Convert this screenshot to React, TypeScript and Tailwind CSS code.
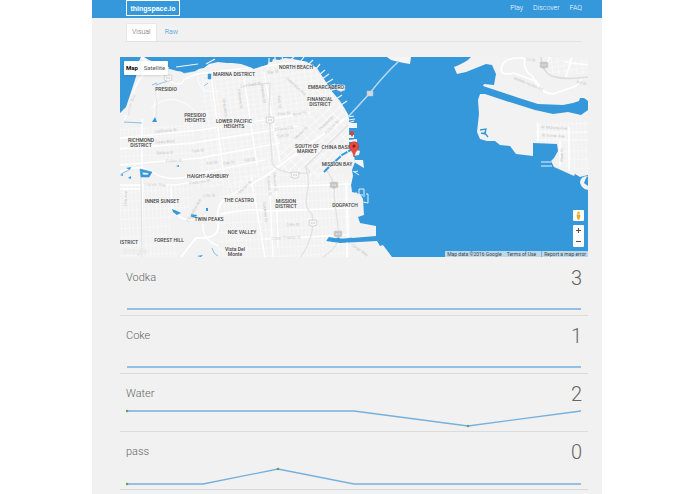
import { useState } from "react"

type Point = [number, number]

type Reading = {
  name: string
  value: number
  points: Point[]
  spots?: Point[]
}

type Place = {
  x: number
  y: number
  lines: string[]
}

type Street = {
  x: number
  y: number
  angle: number
  name: string
}

const readings: Reading[] = [
  { name: "Vodka", value: 3, points: [[1, 17], [455, 17]] },
  { name: "Coke", value: 1, points: [[1, 17], [455, 17]] },
  {
    name: "Water",
    value: 2,
    points: [[1, 3], [228, 3], [342, 18], [455, 3]],
    spots: [[1, 3], [342, 18]],
  },
  {
    name: "pass",
    value: 0,
    points: [[1, 18], [77, 18], [152, 3], [228, 18], [455, 18]],
    spots: [[1, 18], [152, 3]],
  },
]

const places: Place[] = [
  { x: 114, y: 19, lines: ["MARINA DISTRICT"] },
  { x: 46, y: 34, lines: ["PRESIDIO"] },
  { x: 176, y: 12, lines: ["NORTH BEACH"] },
  { x: 206, y: 32, lines: ["EMBARCADERO"] },
  { x: 200, y: 44, lines: ["FINANCIAL", "DISTRICT"] },
  { x: 75, y: 60, lines: ["PRESIDIO", "HEIGHTS"] },
  { x: 114, y: 66, lines: ["LOWER PACIFIC", "HEIGHTS"] },
  { x: 21, y: 85, lines: ["RICHMOND", "DISTRICT"] },
  { x: 187, y: 91, lines: ["SOUTH OF", "MARKET"] },
  { x: 217, y: 92, lines: ["CHINA BASIN"] },
  { x: 217, y: 109, lines: ["MISSION BAY"] },
  { x: 88, y: 121, lines: ["HAIGHT-ASHBURY"] },
  { x: 42, y: 146, lines: ["INNER SUNSET"] },
  { x: 119, y: 145, lines: ["THE CASTRO"] },
  { x: 166, y: 146, lines: ["MISSION", "DISTRICT"] },
  { x: 225, y: 150, lines: ["DOGPATCH"] },
  { x: 89, y: 164, lines: ["TWIN PEAKS"] },
  { x: 122, y: 177, lines: ["NOE VALLEY"] },
  { x: 49, y: 185, lines: ["FOREST HILL"] },
  { x: 9, y: 187, lines: ["ISTRICT"] },
  { x: 115, y: 194, lines: ["Vista Del", "Monte"] },
]

const streets: Street[] = [
  { x: 12, y: 48, angle: -72, name: "Lincoln Blvd" },
  { x: 46, y: 75, angle: -5, name: "California St" },
  { x: 45, y: 86, angle: -3, name: "Geary Blvd" },
  { x: 45, y: 97, angle: -3, name: "Balboa St" },
  { x: 78, y: 95, angle: -8, name: "Turk St" },
  { x: 54, y: 105, angle: -3, name: "Fulton St" },
  { x: 35, y: 129, angle: 2, name: "Lincoln Way" },
  { x: 80, y: 126, angle: -8, name: "Frederick St" },
  { x: 92, y: 107, angle: -8, name: "Fell St" },
  { x: 109, y: 107, angle: -8, name: "Oak St" },
  { x: 89, y: 140, angle: -4, name: "17th St" },
  { x: 75, y: 154, angle: -60, name: "Clarendon Ave" },
  { x: 7, y: 142, angle: -88, name: "19th Ave" },
  { x: 131, y: 29, angle: -8, name: "Lombard St" },
  { x: 104, y: 53, angle: 83, name: "Divisadero St" },
  { x: 119, y: 42, angle: 83, name: "Fillmore St" },
  { x: 142, y: 37, angle: 83, name: "Franklin St" },
  { x: 158, y: 45, angle: 83, name: "Polk St" },
  { x: 153, y: 16, angle: -8, name: "Bay St" },
  { x: 175, y: 30, angle: 42, name: "Columbus Ave" },
  { x: 164, y: 58, angle: -8, name: "Pine St" },
  { x: 180, y: 58, angle: -8, name: "Bush St" },
  { x: 164, y: 73, angle: -8, name: "O'Farrell St" },
  { x: 163, y: 80, angle: -8, name: "Turk St" },
  { x: 182, y: 77, angle: -43, name: "Market St" },
  { x: 207, y: 67, angle: -43, name: "Howard St" },
  { x: 213, y: 71, angle: -43, name: "Folsom St" },
  { x: 130, y: 104, angle: -8, name: "Fell St" },
  { x: 126, y: 131, angle: -42, name: "Market St" },
  { x: 148, y: 129, angle: 85, name: "Valencia St" },
  { x: 154, y: 125, angle: 85, name: "Mission St" },
  { x: 144, y: 155, angle: 85, name: "Guerrero St" },
  { x: 173, y: 169, angle: -2, name: "24th St" },
  { x: 166, y: 182, angle: -3, name: "Cesar Chavez St" },
  { x: 239, y: 194, angle: 35, name: "Cargo Way" },
  { x: 410, y: 4, angle: 8, name: "7th St" },
  { x: 408, y: 28, angle: 22, name: "Middle Harbor Rd" },
  { x: 461, y: 27, angle: 15, name: "3rd St" },
  { x: 434, y: 72, angle: 3, name: "W Midway Ave" },
  { x: 433, y: 80, angle: 3, name: "W Tower Ave" },
  { x: 443, y: 98, angle: -88, name: "Main St" },
]

function Header() {
  return (
    <header className="flex h-[18px] items-start justify-between bg-[#3498db] px-[34px] pr-5">
      <a
        href="#"
        className="flex h-4 w-[54px] items-center justify-center border border-white font-['Liberation_Sans',sans-serif] text-[7px] font-bold leading-none text-white"
      >
        thingspace.io
      </a>
      <nav className="flex h-4 items-center gap-[10px] text-[7px] font-light leading-none text-white">
        <a href="#play">Play</a>
        <a href="#discover">Discover</a>
        <a href="#faq">FAQ</a>
      </nav>
    </header>
  )
}

function Shield({ x, y, solid = false }: { x: number; y: number; solid?: boolean }) {
  return (
    <g transform={`translate(${x} ${y})`}>
      <path
        d="M-4-2.5Q-2-3.5 0-2.7 2-3.5 4-2.5 3.3 0 4 2 2 2.6 0 3.5-2 2.6-4 2-3.3 0-4-2.5Z"
        fill={solid ? "#c4c4c4" : "#f7f7f7"}
        stroke="#c8c8c8"
        strokeWidth=".7"
      />
      <path d="M-2 0H2" stroke={solid ? "#eee" : "#bdbdbd"} strokeWidth="1.2" strokeDasharray="1 .5" />
    </g>
  )
}

function MapDrawing() {
  return (
    <svg
      viewBox="0 0 468 200"
      preserveAspectRatio="xMidYMid slice"
      className="block h-full w-full"
      role="img"
      aria-label="Map of San Francisco"
    >
      <defs>
        <pattern id="avenues" width="4" height="9" patternUnits="userSpaceOnUse" patternTransform="rotate(-3)">
          <path d="M0 0V9M0 0H4" stroke="#fbfbfb" strokeWidth="1" />
        </pattern>
        <pattern id="blocks" width="6" height="5" patternUnits="userSpaceOnUse" patternTransform="rotate(-8)">
          <path d="M0 0V5M0 0H6" stroke="#fcfcfc" strokeWidth="1.2" />
        </pattern>
        <pattern id="soma" width="9" height="6" patternUnits="userSpaceOnUse" patternTransform="rotate(-43)">
          <path d="M0 0V6M0 0H9" stroke="#fdfdfd" strokeWidth="1.4" />
        </pattern>
        <clipPath id="city">
          <path d="M24 0L29 3 37 6 43 10 50 12 57 14 65 15 78 12 84 11 89 7 98 5 107 6 112 6 121 7 127 9 134 12 140 10 147 8 149 5 152 5 153 2 159 3 165 1 173 2 178 3 187 5 192 8 197 11 202 19 206 25 210 32 215 38 220 44 225 52 229 59 229 93 234 98 235 105 232 113 233 119 231 128 232 135 240 137 243 142 244 158 238 160 240 166 256 169 256 179 220 182 209 180 206 184 220 186 257 184 260 189 263 188 266 192 272 200H0V56L6 50 10 38 14 26 18 13 18 6 21 0Z" />
        </clipPath>
      </defs>

      <rect width="468" height="200" fill="#3498db" />

      {/* peninsula */}
      <g clipPath="url(#city)">
        <rect width="280" height="200" fill="#f2f2f2" />
        <path d="M0 72L74 65 78 101 0 105Z" fill="url(#avenues)" />
        <path d="M0 128L72 127 70 150 50 161 57 200H0Z" fill="url(#avenues)" />
        <path d="M82 17L190 5 230 60 180 95 120 130 78 130Z" fill="url(#blocks)" />
        <path d="M210 42L231 62V105L190 125 150 108Z" fill="#f2f2f2" />
        <path d="M210 42L231 62V105L190 125 150 108Z" fill="url(#soma)" />
        <path d="M100 133L145 108 232 118 230 200H98Z" fill="url(#avenues)" />

        <g fill="none" stroke="#fff" strokeWidth="1.4">
          <path d="M22 0Q35 15 48 23T64 23Q75 16 85 16L188 4" />
          <path d="M32 12Q13 22 12 48L4 63" />
          <path d="M46 22Q32 37 34 64" strokeWidth=".8" />
          <path d="M31 51Q53 32 76 55L65 68M78 20Q78 38 101 34" strokeWidth=".8" />
          <path d="M0 81L80 73 190 56M0 92L72 86 178 69M0 108L80 101 160 86" />
          <path d="M0 115Q18 106 34 116T73 118L145 103" />
          <path d="M0 128H56L107 118" />
          <path d="M91 18L104 119M123 15L137 108M144 15L160 105" />
          <path d="M230 58L144 120 108 140Q95 147 98 165T76 181L61 200" strokeWidth="1.8" />
          <path d="M51 130L52 151Q60 163 69 163T85 159Q77 180 98 189" />
          <path d="M101 157Q128 151 149 154L231 151M145 182L227 178M149 130L231 127" />
          <path d="M131 120L145 200M149 115L153 200M156 116L158 190" />
          <path d="M227 185V200M226 125L228 180" strokeWidth="2" />
        </g>
        <path d="M22 62V200M0 132H24" stroke="#fff" strokeWidth="2" opacity=".75" />
        <g fill="none" stroke="#e2e2e2" strokeWidth="1.3">
          <path d="M21 117L22 200" />
          <path d="M36 26Q34 32 37 47L36 65" strokeWidth=".7" />
          <path d="M131 28L150 26 149 58 152 101Q150 114 174 116T185 110L229 67" />
          <path d="M186 111Q190 123 187 137T192 157Q196 177 181 200" />
          <path d="M205 112Q216 123 214 138L219 178Q219 190 203 200" />
        </g>
      </g>

      {/* wharves and marina */}
      <path d="M61 14Q70 9 80 11L75 14 64 16ZM88 17H91V22H88ZM36 28L48 24M84 29L88 26" fill="#3498db" stroke="#3498db" strokeWidth=".5" />
      <g fill="none" stroke="#f2f2f2" strokeWidth="1.2">
        <path d="M38 7L49 11M56 10L78 7M86 7L95 2M149 8V1M155 5V0M163 3L162 0M170 3L174 0M180 5L184 0M188 8L193 3M195 13L200 7M199 18L205 13M202 22L209 17M205 27L213 22M207 31L215 27M210 34L218 31" />
        <path d="M216 42L222 38M221 48L227 44M228 60L234 59M228 63L235 62M228 66L234 64" />
      </g>
      <path d="M228 66H237V71H228ZM228 78H234V81H228ZM228 83L237 82V85H229ZM229 91L240 94 239 98 233 99ZM235 103L243 103 244 111 234 105Z" fill="#f5f5f5" />
      <path d="M233 114L239 118M234 115L238 114M236 135V138H243M239 137V132H244V140M246 137H248V146L243 145" stroke="#e4f0f8" fill="none" strokeWidth="1" />
      <path d="M204 115L211 108 222 98 232 92" stroke="#3498db" fill="none" strokeWidth="2" strokeDasharray="7 1" />
      <path d="M217 181Q221 185 232 182" stroke="#3498db" fill="none" strokeWidth="3" />

      {/* lakes */}
      <g fill="#3498db">
        <path d="M32 65L35 60 37 65ZM52 152L57 154 61 156 57 158 53 155ZM71 157L77 158 76 161 71 160ZM86 151H88V154H86ZM6 111L11 110 10 113ZM8 121L11 119 11 122ZM56 109L59 108V110ZM0 118L3 117V119ZM77 199L83 198 81 200Z" />
        <path d="M20 112L32 115 29 120 21 120ZM22 115L23 118H28L29 116Z" fillRule="evenodd" stroke="#3498db" strokeWidth=".6" />
      </g>
      <path d="M4 65L22 66M92 191Q93 197 98 199M1 117L9 113M32 28L37 26" stroke="#6bb2e3" fill="none" strokeWidth=".8" />

      {/* east bay */}
      <path
        d="M334 10Q347 5 351 0H468V44L464 41 460 41 459 44 453 46 443 48 418 47 399 41 372 32 363 29 364 27 374 28 376 17 372 8 366 7 356 11 346 15 337 17Z"
        fill="#f2f2f2"
      />
      <path
        d="M468 53L461 58 448 55 433 57 415 53 386 44 365 37 360 37 358 43 359 57 357 75 360 82 367 84 375 84 380 88 390 89 396 97 413 99 413 86 437 87 438 94 434 101 431 104 434 110 443 114 454 119 455 117 460 120 468 118Z"
        fill="#f2f2f2"
      />
      <path d="M431 105H421M432 109H421" stroke="#e7f3fb" strokeWidth="1" />
      <path d="M468 119Q460 119 460 126 462 132 468 133V129L464 126 466 121Z" fill="#f2f2f2" />
      <path d="M360 73L366 72 365 77 361 76M364 75L368 80" stroke="#3498db" fill="none" strokeWidth="1.3" />
      <path d="M416 65H468V82H437V86H417ZM440 86H468V117L440 107Z" fill="url(#avenues)" />
      <path d="M428 0L468 4V17L430 17Z" fill="url(#blocks)" />
      <g fill="none" stroke="#fff" strokeWidth="1.6">
        <path d="M410 2Q386-2 382 9T394 16L415 24Q422 37 433 37L456 29 462 22" />
        <path d="M405 1Q402 12 412 19L425 35M452 0L446 20M430 0L425 11M468 8L445 5M418 66V84M440 84V109M449 70V114" />
        <path d="M416 75H468M416 83H468" strokeWidth=".8" />
      </g>
      <path d="M421 0Q422 17 435 20T468 20" stroke="#dcdcdc" fill="none" strokeWidth="1.5" />

      {/* bay bridge */}
      <path d="M267 0H291L290 7 284 6 279 5 271 3Z" fill="#f5f5f5" />
      <path d="M279 4Q263 19 250 36L228 60" stroke="#b9daf1" fill="none" strokeWidth="1.5" />
      <path d="M247 34H253V39H247Z" fill="#d4d8db" stroke="#b7c8d5" strokeWidth=".5" />

      <Shield x={48} y={21} />
      <Shield x={150} y={63} />
      <Shield x={175} y={118} />
      <Shield x={193} y={166} />
      <Shield x={214} y={128} solid />
      <Shield x={218} y={177} solid />
      <Shield x={424} y={8} solid />
      <Shield x={221} y={31} />

      <g className="font-['Roboto',sans-serif] text-[4px]" fill="#c8c8c8" textAnchor="middle">
        {streets.map((street) => (
          <text
            key={`${street.name}-${street.x}`}
            x={street.x}
            y={street.y}
            transform={`rotate(${street.angle} ${street.x} ${street.y})`}
          >
            {street.name}
          </text>
        ))}
      </g>

      <g
        className="font-['Roboto',sans-serif] text-[5px] font-medium"
        fill="#444"
        stroke="#f5f5f5"
        strokeWidth=".8"
        strokeOpacity=".7"
        paintOrder="stroke"
        textAnchor="middle"
      >
        {places.map((place) =>
          place.lines.map((line, i) => (
            <text key={line} x={place.x} y={place.y + i * 5}>
              {line}
            </text>
          ))
        )}
      </g>

      <text x="2" y="197" className="font-['Roboto',sans-serif] text-[8px] font-medium" fill="#fff" stroke="#dcdcdc" strokeWidth=".3">
        Google
      </text>

      {/* markers */}
      <path d="M232 80Q230 77 230 76A2 2 0 0 1 234 76Q234 77 232 80Z" fill="#d9453d" />
      <path d="M234 100Q233 95 230.500 92.500A4.700 4.700 0 1 1 237.500 92.500Q235 95 234 100Z" fill="#ea4b40" stroke="#b7352d" strokeWidth=".5" />
      <circle cx="234" cy="89" r="1.500" fill="#7c1e19" />
    </svg>
  )
}

function DeviceMap() {
  return (
    <section className="relative h-[200px] overflow-hidden">
      <MapDrawing />
      <div className="absolute left-1 top-1 flex h-[14px] items-center rounded-[1px] bg-white text-[6px] leading-none shadow-sm">
        <button type="button" className="h-full w-4 font-bold text-black">
          Map
        </button>
        <button type="button" className="h-full w-7 border-l border-gray-100 text-[#555]">
          Satellite
        </button>
      </div>
      <div className="absolute bottom-[10px] right-1 flex w-[11px] flex-col gap-1">
        <button type="button" aria-label="Street View" className="flex h-[11px] items-center justify-center rounded-[1px] bg-white">
          <svg viewBox="0 0 8 10" className="h-[9px] w-[7px]">
            <circle cx="4" cy="2" r="1.600" fill="#f4b52c" />
            <path d="M2 4H6L5.700 7H5.200L5 9.500H3L2.800 7H2.300Z" fill="#f2a91f" stroke="#c98a1b" strokeWidth=".3" />
          </svg>
        </button>
        <div className="flex h-[22px] flex-col rounded-[1px] bg-white">
          <button type="button" aria-label="Zoom in" className="flex flex-1 items-center justify-center">
            <svg viewBox="0 0 5 5" className="h-[5px] w-[5px]">
              <path d="M0 2.500H5M2.500 0V5" stroke="#555" strokeWidth="1.100" />
            </svg>
          </button>
          <button type="button" aria-label="Zoom out" className="flex flex-1 items-center justify-center">
            <svg viewBox="0 0 5 5" className="h-[5px] w-[5px]">
              <path d="M0 2.500H5" stroke="#555" strokeWidth="1.100" />
            </svg>
          </button>
        </div>
      </div>
      <div className="absolute bottom-0 right-0 flex h-[6px] items-center gap-[5px] whitespace-nowrap bg-[#f5f5f5]/70 px-[2px] text-[5px] leading-[6px] text-[#444]">
        <span>Map data ©2016 Google</span>
        <a href="#terms">Terms of Use</a>
        <a href="#report" className="border-l border-[#9ab] pl-[2px]">Report a map error</a>
      </div>
    </section>
  )
}

function ReadingRow({ name, value, points, spots = [] }: Reading) {
  return (
    <li className="flex h-[58px] flex-col justify-between border-b border-[#d9dbdd] px-[6px] pb-[3px]">
      <div className="flex h-[34px] items-end justify-between font-light text-[#666]">
        <h2 className="pb-[6px] text-[11px] leading-4">{name}</h2>
        <span className="pb-[2px] text-[20px] leading-6">{value}</span>
      </div>
      <svg viewBox="0 0 456 20" preserveAspectRatio="none" className="block h-5 w-full" aria-hidden="true">
        <polyline points={points.join(" ")} fill="none" stroke="#75b1de" strokeWidth="1.300" />
        {spots.map(([x, y]) => (
          <circle key={x} cx={x} cy={y} r="1.300" fill="#62a35a" />
        ))}
      </svg>
    </li>
  )
}

export default function App() {
  const [tab, setTab] = useState("Visual")

  return (
    <div className="min-h-screen bg-white pl-[92px] pr-[93px] font-['Roboto',sans-serif]">
      <div className="min-h-screen bg-[#f1f1f1]">
        <Header />
        <main className="pl-7 pr-[14px]">
          <div className="mx-[6px] mt-[5px] flex h-[19px] border-b border-[#e4e4e4] text-[7px] font-light leading-none">
            {["Visual", "Raw"].map((name) => (
              <button
                key={name}
                type="button"
                onClick={() => setTab(name)}
                className={
                  name === tab
                    ? "rounded-t-[2px] border border-b-0 border-[#e8e8e8] bg-white px-[5px] text-[#666]"
                    : "px-2 text-[#3498db]"
                }
              >
                {name}
              </button>
            ))}
          </div>
          <div className="mt-[15px]">
            <DeviceMap />
          </div>
          <ul className="mt-px">
            {readings.map((reading) => (
              <ReadingRow key={reading.name} {...reading} />
            ))}
          </ul>
        </main>
      </div>
    </div>
  )
}
